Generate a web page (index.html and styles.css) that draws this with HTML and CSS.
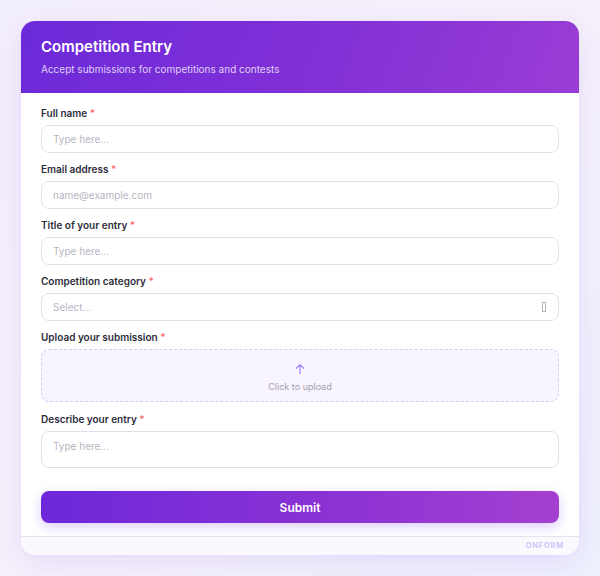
FILE: index.html
```html
<!doctype html>
<html lang="en">
<head>
    <meta charset="UTF-8">
    <title>Competition Entry</title>
    <link rel="stylesheet" href="styles.css">
</head>
<body>
<div class="form-card">
    <div class="form-head">
        <h1 class="form-title">Competition Entry</h1>
        <p class="form-sub">Accept submissions for competitions and contests</p>
    </div>
    <form class="form-body" onsubmit="return false">
        <div class="field">
            <label class="field-label">Full name <span class="req">*</span></label>
            <input class="field-input" type="text" placeholder="Type here...">
        </div>
        <div class="field">
            <label class="field-label">Email address <span class="req">*</span></label>
            <input class="field-input" type="email" placeholder="name@example.com">
        </div>
        <div class="field">
            <label class="field-label">Title of your entry <span class="req">*</span></label>
            <input class="field-input" type="text" placeholder="Type here...">
        </div>
        <div class="field">
            <label class="field-label">Competition category <span class="req">*</span></label>
            <div class="field-input field-select">
                <span class="select-text">Select...</span>
                <span class="select-icon"></span>
            </div>
        </div>
        <div class="field">
            <label class="field-label">Upload your submission <span class="req">*</span></label>
            <div class="upload-box">
                <svg class="upload-icon" width="12" height="12" viewBox="0 0 12 12">
                    <path d="M6 10.5V1.8M2.4 5.2L6 1.6l3.6 3.6" fill="none" stroke="#a78bfa" stroke-width="1.3" stroke-linecap="round" stroke-linejoin="round"/>
                </svg>
                <span class="upload-text">Click to upload</span>
            </div>
        </div>
        <div class="field field-last">
            <label class="field-label">Describe your entry <span class="req">*</span></label>
            <textarea class="field-input field-area" placeholder="Type here..."></textarea>
        </div>
        <button class="submit-btn" type="submit">Submit</button>
    </form>
    <div class="form-foot">ONFORM</div>
</div>
</body>
</html>
```

FILE: styles.css
```css
* {
    box-sizing: border-box;
}
body {
    margin: 0;
    padding: 21px;
    font-family: Inter, "Noto Sans", sans-serif;
    background: linear-gradient(135deg, #f3eefb 0%, #f5f0fb 50%, #eef0fd 100%);
    min-height: 576px;
}
.form-card {
    width: 558px;
    height: 534px;
    background: #fff;
    border-radius: 14px;
    overflow: hidden;
    display: flex;
    flex-direction: column;
    box-shadow: 0 8px 30px rgba(124, 58, 237, 0.10), 0 1px 3px rgba(124, 58, 237, 0.06);
}
.form-head {
    height: 72px;
    padding: 17px 20px 0;
    background: linear-gradient(110deg, #6c2ad9 0%, #8230d6 55%, #9a3dd5 100%);
    color: #fff;
}
.form-title {
    margin: 0;
    font-size: 15px;
    line-height: 18px;
    font-weight: 600;
}
.form-sub {
    margin: 6px 0 0;
    font-size: 10px;
    line-height: 14px;
    color: rgba(255, 255, 255, 0.78);
}
.form-body {
    flex: 1;
    padding: 13px 20px 0;
    display: flex;
    flex-direction: column;
    gap: 9px;
}
.field {
    display: flex;
    flex-direction: column;
    gap: 5px;
}
.field-last {
    margin-top: 1px;
}
.field-label {
    font-size: 10px;
    line-height: 14px;
    font-weight: 600;
    color: #2d2c3b;
}
.req {
    color: #f87171;
}
.field-input {
    width: 100%;
    height: 28px;
    border: 1.5px solid #e1e0e8;
    border-radius: 8px;
    padding: 0 11px;
    font-family: inherit;
    font-size: 10px;
    color: #2b2a38;
    background: #fff;
    outline: none;
}
.field-input::placeholder {
    color: #b7b5c2;
}
.field-select {
    display: flex;
    align-items: center;
    justify-content: space-between;
}
.select-text {
    color: #b7b5c2;
}
.select-icon {
    width: 4px;
    height: 10px;
    border: 1px solid #b4b2bc;
    margin-right: 1px;
}
.upload-box {
    height: 53px;
    border: 1.5px dashed #d8cbfb;
    border-radius: 8px;
    background: #f9f5ff;
    display: flex;
    flex-direction: column;
    align-items: center;
    justify-content: center;
    gap: 6px;
    padding-top: 3px;
}
.upload-text {
    font-size: 9px;
    color: #a19dab;
}
.field-area {
    height: 37px;
    padding-top: 8px;
    resize: none;
    display: block;
}
.submit-btn {
    margin-top: 14px;
    height: 32px;
    border: none;
    border-radius: 8px;
    background: linear-gradient(90deg, #6d28d9 0%, #8a32d4 55%, #a53fd0 100%);
    color: #fff;
    font-family: inherit;
    font-size: 12px;
    font-weight: 600;
    box-shadow: 0 4px 12px rgba(124, 58, 237, 0.25);
    cursor: pointer;
}
.form-foot {
    height: 19px;
    border-top: 1px solid #e6e4ee;
    background: #faf9fe;
    text-align: right;
    padding: 0 15px 0 0;
    font-size: 7.5px;
    line-height: 18px;
    font-weight: 600;
    letter-spacing: 0.8px;
    color: #cdbdfc;
}
```
